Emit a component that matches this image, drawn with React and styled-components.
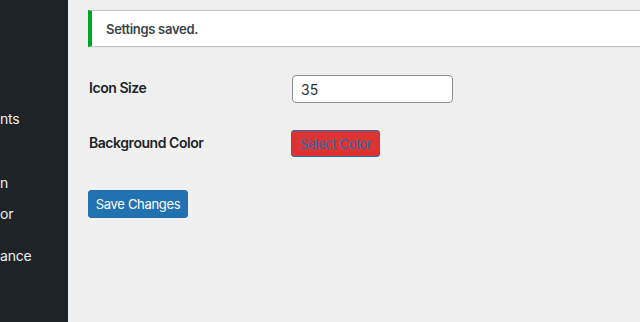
import React from "react";
import styled, { createGlobalStyle } from "styled-components";

const Global = createGlobalStyle`
  html, body { margin: 0; padding: 0; }
  body {
    background: #f0f0f1;
    font-family: Inter, "Noto Sans", "Liberation Sans", sans-serif;
    color: #1d2327;
    width: 640px;
    height: 322px;
    overflow: hidden;
  }
`;

const Layout = styled.div`
  display: flex;
  width: 640px;
  height: 322px;
  overflow: hidden;
`;

const Sidebar = styled.nav`
  flex: 0 0 68px;
  background: #1d2327;
  display: flex;
  flex-direction: column;
  padding-top: 109px;
  box-sizing: border-box;
`;

const MenuItem = styled.div`
  height: ${(p) => p.$h}px;
  padding-left: ${(p) => p.$pad || 0}px;
  font-size: 14px;
  line-height: 20px;
  color: #f0f0f1;
  white-space: nowrap;
  letter-spacing: -0.2px;
`;

const Main = styled.main`
  flex: 1;
  padding: 10px 0 0 20px;
  overflow: hidden;
`;

const Notice = styled.div`
  width: calc(100% + 10px);
  height: 37px;
  box-sizing: border-box;
  background: #fff;
  border: 1px solid #c3c4c7;
  border-left: 4px solid #00a32a;
  box-shadow: 0 1px 1px rgba(0, 0, 0, 0.04);
  display: flex;
  align-items: center;
  padding-left: 14px;
  font-size: 13px;
  font-weight: 600;
  color: #3c434a;
  letter-spacing: -0.3px;
`;

const FormTable = styled.div`
  display: grid;
  grid-template-columns: 203px auto;
  row-gap: 27px;
  align-items: center;
  justify-items: start;
  margin-top: 28px;
`;

const Label = styled.div`
  font-size: 14px;
  font-weight: 600;
  color: #1d2327;
  letter-spacing: -0.45px;
  padding: 0 0 3px 1px;
`;

const TextInput = styled.input`
  width: 161px;
  height: 28px;
  box-sizing: border-box;
  border: 1px solid #8c8f94;
  border-radius: 4px;
  background: #fff;
  padding: 0 8px;
  font-family: inherit;
  font-size: 14px;
  color: #2c3338;
  outline: none;
  margin-left: 1px;
`;

const ColorButton = styled.button`
  height: 27px;
  width: 89px;
  box-sizing: border-box;
  border: 1px solid #2271b1;
  border-radius: 3px;
  background: ${(p) => p.$color};
  color: #2271b1;
  font-family: inherit;
  font-size: 13px;
  letter-spacing: -0.3px;
  white-space: nowrap;
  padding: 0;
  cursor: pointer;
`;

const PrimaryButton = styled.button`
  margin-top: 33px;
  height: 28px;
  width: 100px;
  box-sizing: border-box;
  border: 1px solid #2271b1;
  border-radius: 3px;
  background: #2271b1;
  color: #fff;
  font-family: inherit;
  font-size: 13px;
  letter-spacing: -0.3px;
  white-space: nowrap;
  padding: 0;
  cursor: pointer;
`;

export default function App() {
  return (
    <>
      <Global />
      <Layout>
        <Sidebar>
          <MenuItem $h={64}>nts</MenuItem>
          <MenuItem $h={31}>n</MenuItem>
          <MenuItem $h={42}>or</MenuItem>
          <MenuItem $h={32}>ance</MenuItem>
        </Sidebar>
        <Main>
          <Notice>Settings saved.</Notice>
          <FormTable>
            <Label>Icon Size</Label>
            <TextInput defaultValue="35" />
            <Label>Background Color</Label>
            <ColorButton $color="#dd3333">Select Color</ColorButton>
          </FormTable>
          <PrimaryButton>Save Changes</PrimaryButton>
        </Main>
      </Layout>
    </>
  );
}
